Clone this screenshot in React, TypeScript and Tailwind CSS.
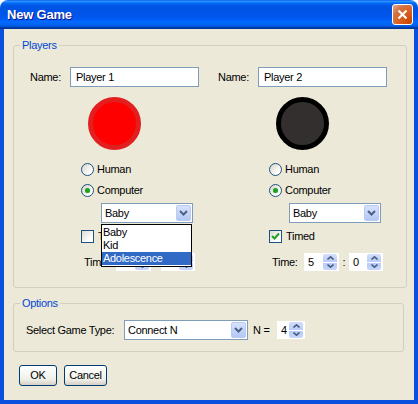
import React from 'react';

const font = "font-[family-name:'Liberation_Sans',Arial,sans-serif]";

function Chevron() {
  return (
    <svg width="9" height="6" viewBox="0 0 9 6">
      <polyline points="1,1 4.5,4.5 8,1" fill="none" stroke="#4D6185" strokeWidth="2" />
    </svg>
  );
}

function Radio({ checked, label }: { checked?: boolean; label: string }) {
  return (
    <div className="flex items-center h-[13px]">
      <span className="w-[13px] h-[13px] rounded-full border border-[#1C5180] bg-[linear-gradient(135deg,#D6D3C8,#FFFFFF_75%)] flex items-center justify-center">
        {checked && <span className="w-[5px] h-[5px] rounded-full bg-[#21A121] shadow-[0_0_1px_#7FD07F]" />}
      </span>
      <span className="ml-[3px] leading-[13px]">{label}</span>
    </div>
  );
}

function Checkbox({ checked, label }: { checked?: boolean; label: string }) {
  return (
    <div className="flex items-center h-[13px]">
      <span className="w-[13px] h-[13px] border border-[#1C5180] bg-[linear-gradient(135deg,#DCD9CF,#FFFFFF_75%)] flex items-center justify-center">
        {checked && (
          <svg width="9" height="9" viewBox="0 0 9 9">
            <polyline points="1,4 3.5,6.5 8,1.5" fill="none" stroke="#21A121" strokeWidth="2" />
          </svg>
        )}
      </span>
      <span className="ml-[4px] leading-[13px]">{label}</span>
    </div>
  );
}

function Combo({ value, width }: { value: string; width: string }) {
  return (
    <div className={`flex items-center h-[20px] border border-[#7F9DB9] bg-white ${width}`}>
      <span className="flex-1 pl-[3px] leading-[13px]">{value}</span>
      <span className="w-[15px] h-[16px] mr-[1px] rounded-[2px] border border-[#B9CBF3] bg-[linear-gradient(to_bottom,#D6E2FC,#B4C8F6)] flex items-center justify-center">
        <Chevron />
      </span>
    </div>
  );
}

function Spinner({ value, width }: { value: string; width: string }) {
  return (
    <div className={`flex h-[18px] bg-white ${width}`}>
      <span className="flex-1 pl-[4px] leading-[18px]">{value}</span>
      <span className="w-[14px] my-[1px] mr-[2px] flex flex-col gap-[1px] bg-white">
        <span className="flex-1 rounded-t-[2px] bg-[linear-gradient(to_bottom,#D3DFFC,#B9CCF7)] flex items-center justify-center">
          <svg width="7" height="4" viewBox="0 0 7 4">
            <polyline points="0.5,3.5 3.5,0.8 6.5,3.5" fill="none" stroke="#4D6185" strokeWidth="1.6" />
          </svg>
        </span>
        <span className="flex-1 rounded-b-[2px] bg-[linear-gradient(to_bottom,#B9CCF7,#C6D6FA)] flex items-center justify-center">
          <svg width="7" height="4" viewBox="0 0 7 4">
            <polyline points="0.5,0.5 3.5,3.2 6.5,0.5" fill="none" stroke="#4D6185" strokeWidth="1.6" />
          </svg>
        </span>
      </span>
    </div>
  );
}

function Disc({ color }: { color: 'red' | 'black' }) {
  const cls =
    color === 'red'
      ? 'border-[#E31E1E] bg-[#FF0000]'
      : 'border-[#000000] bg-[#332F2F]';
  return <div className={`mt-[10px] ml-[58px] w-[53px] h-[53px] rounded-full border-[5px] ${cls}`} />;
}

function PlayerColumn({
  name,
  color,
  timed,
  open,
}: {
  name: string;
  color: 'red' | 'black';
  timed?: boolean;
  open?: boolean;
}) {
  return (
    <div className="w-[188px] flex flex-col">
      <div className="flex items-center h-[20px]">
        <span className="w-[40px] leading-[13px]">Name:</span>
        <div className="w-[129px] h-[20px] border border-[#7F9DB9] bg-white pl-[5px] flex items-center leading-[13px]">
          {name}
        </div>
      </div>
      <Disc color={color} />
      <div className="ml-[51px] mt-[13px]">
        <Radio label="Human" />
      </div>
      <div className="ml-[51px] mt-[8px]">
        <Radio checked label="Computer" />
      </div>
      <div className="ml-[71px] mt-[6px] relative w-[92px]">
        <Combo value="Baby" width="w-[92px]" />
        {open && (
          <div className="absolute left-0 top-[21px] z-10 w-[91px] border border-black bg-white py-[1px]">
            <div className="h-[13px] leading-[13px] pl-[1px]">Baby</div>
            <div className="h-[13px] leading-[13px] pl-[1px]">Kid</div>
            <div className="h-[13px] leading-[13px] pl-[1px] bg-[#316AC5] text-white">Adolescence</div>
          </div>
        )}
      </div>
      <div className="ml-[51px] mt-[7px]">
        <Checkbox checked={timed} label="Timed" />
      </div>
      <div className="ml-[54px] mt-[10px] flex items-center">
        <span className="w-[32px] leading-[13px]">Time:</span>
        <Spinner value="5" width="w-[35px]" />
        <span className="w-[10px] text-center leading-[13px]">:</span>
        <Spinner value="0" width="w-[34px]" />
      </div>
    </div>
  );
}

function TitleBar() {
  return (
    <div className="h-[29px] flex items-center pl-[7px] pr-[5px] bg-[linear-gradient(to_bottom,#0058EE_0%,#3593FF_4%,#288EFF_6%,#127DFF_8%,#036FFC_10%,#0262EE_14%,#0057E5_20%,#0054E3_24%,#0055EB_56%,#005BF5_66%,#026AFE_76%,#0062EF_86%,#0052D6_92%,#0040AB_94%,#003092_100%)]">
      <span className="flex-1 text-white font-bold text-[13px] tracking-[-0.2px] [text-shadow:1px_1px_#0F1089]">
        New Game
      </span>
      <span className="w-[21px] h-[21px] rounded-[3px] border border-white bg-[radial-gradient(circle_at_90%_90%,#CC4600_0%,#DC6527_55%,#CD7546_70%,#E4957A_90%)] flex items-center justify-center">
        <svg width="11" height="11" viewBox="0 0 11 11">
          <line x1="1.5" y1="1.5" x2="9.5" y2="9.5" stroke="white" strokeWidth="2.2" />
          <line x1="9.5" y1="1.5" x2="1.5" y2="9.5" stroke="white" strokeWidth="2.2" />
        </svg>
      </span>
    </div>
  );
}

function XpButton({ label, width }: { label: string; width: string }) {
  return (
    <div
      className={`h-[21px] ${width} rounded-[3px] border border-[#003C74] bg-[linear-gradient(to_bottom,#FFFFFF,#F0F0EA_70%,#D6D0C5)] flex items-center justify-center leading-[13px]`}
    >
      {label}
    </div>
  );
}

export default function App() {
  return (
    <div className={`w-[418px] h-[404px] bg-white ${font} text-[11px] tracking-[-0.3px] text-black`}>
      <div className="w-full h-full flex flex-col rounded-t-[8px] overflow-hidden">
        <TitleBar />
        <div className="flex-1 flex flex-col bg-[#ECE9D8] border-x-[4px] border-b-[4px] border-[#0A4FDD] pl-[9px] pr-[10px]">
          <fieldset className="mt-[10px] border border-[#D0D0BF] rounded-[3px]">
            <legend className="ml-[6px] px-[2px] h-[13px] leading-[13px] text-[#0046D5]">Players</legend>
            <div className="flex pl-[16px] pt-[15px] pb-[16px]">
              <PlayerColumn name="Player 1" color="red" open />
              <PlayerColumn name="Player 2" color="black" timed />
            </div>
          </fieldset>
          <fieldset className="mt-[9px] border border-[#D0D0BF] rounded-[3px]">
            <legend className="ml-[6px] px-[2px] h-[13px] leading-[13px] text-[#0046D5]">Options</legend>
            <div className="flex items-center pl-[12px] pt-[10px] pb-[11px]">
              <span className="w-[98px] leading-[13px]">Select Game Type:</span>
              <Combo value="Connect N" width="w-[124px]" />
              <span className="ml-[5px] w-[24px] leading-[13px]">N =</span>
              <Spinner value="4" width="w-[28px]" />
            </div>
          </fieldset>
          <div className="mt-[13px] ml-[6px] flex gap-[7px]">
            <XpButton label="OK" width="w-[38px]" />
            <XpButton label="Cancel" width="w-[43px]" />
          </div>
        </div>
      </div>
    </div>
  );
}
